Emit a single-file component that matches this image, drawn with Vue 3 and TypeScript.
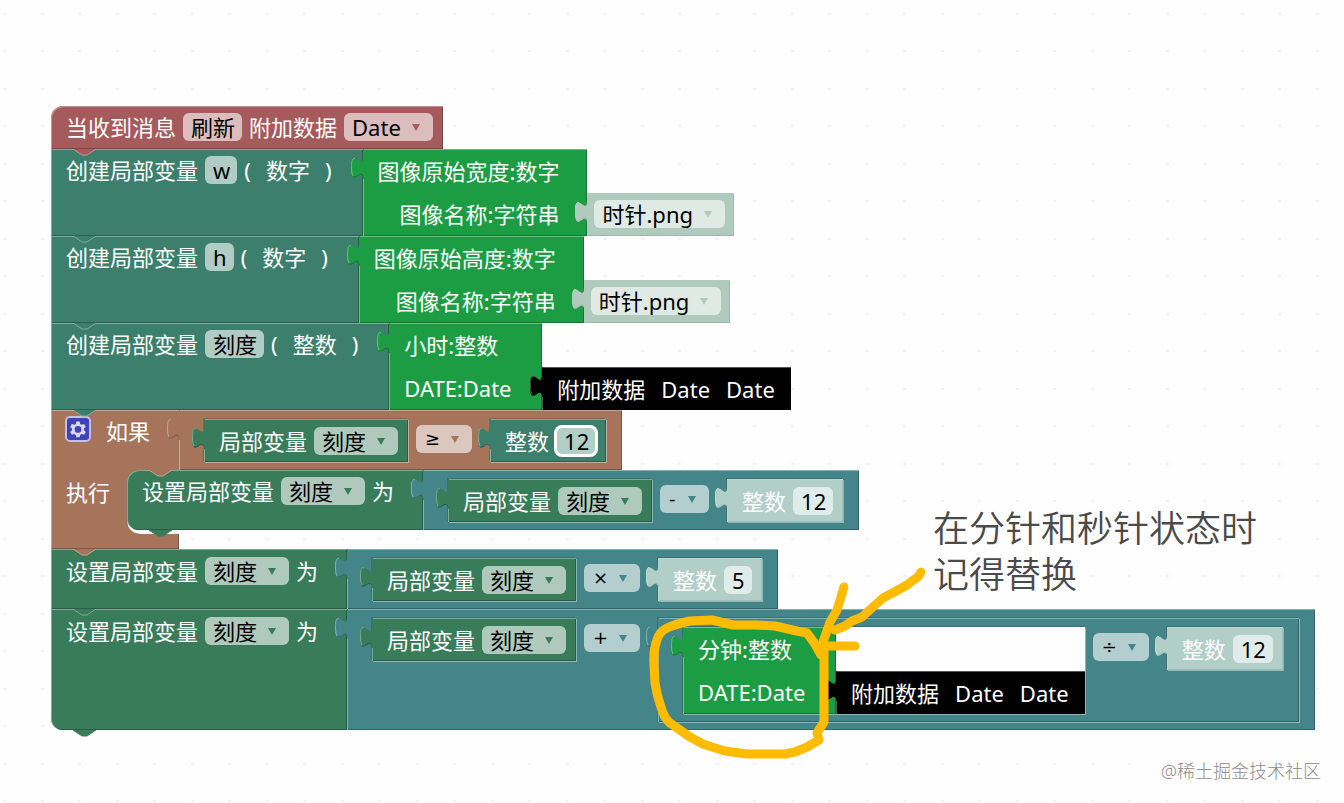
<script setup lang="ts">
import { reactive } from 'vue'

interface ImageVar {
  name: string
  type: string
  title: string
  image: string
}

const imageVars = reactive<ImageVar[]>([
  { name: 'w', type: '数字', title: '图像原始宽度:数字', image: '时针.png' },
  { name: 'h', type: '数字', title: '图像原始高度:数字', image: '时针.png' },
])

const message = reactive({ name: '刷新', data: 'Date' })
const scale = reactive({ name: '刻度', type: '整数' })
const numbers = reactive({ compare: '12', subtract: '12', multiply: '5', divide: '12' })
</script>

<template>
  <main class="workspace">
    <svg class="dots" aria-hidden="true">
      <defs>
        <pattern id="grid" width="75" height="75" patternUnits="userSpaceOnUse">
          <path d="M3 13h3v2h-3zM41 13h3v2h-3zM3 50h3v2h-3zM41 50h3v2h-3z" fill="#f1f1f1" />
        </pattern>
        <symbol id="tab" viewBox="0 0 13 30">
          <path class="tab-fill" d="M13 0H12V8C12 23 0 -4 0 19S12 15 12 30H13Z" />
          <path class="tab-light" d="M4 10C1 8 .5 13 .5 19Q.5 25 2 27" />
          <path class="tab-dark" d="M2 28C6 29 10 22 11.500 27" />
        </symbol>
        <symbol id="notch" viewBox="0 0 24 8">
          <path class="notch-fill" d="M0 -1V0L9 6H14L23 0V-1Z" />
          <path class="notch-line" d="M0 0L9 6H14L23 0" />
        </symbol>
      </defs>
      <rect width="100%" height="100%" fill="url(#grid)" />
    </svg>

    <section class="stack">
      <div class="statement">
        <div class="block body red hat">
          <div class="line">
            <span>当收到消息</span>
            <input v-model="message.name" class="field" aria-label="当收到消息" />
            <span>附加数据</span>
            <span class="drop">
              <select v-model="message.data" class="field" aria-label="附加数据"><option>Date</option></select>
            </span>
          </div>
          <svg class="notch" aria-hidden="true"><use href="#notch" /></svg>
        </div>
      </div>

      <div v-for="item in imageVars" :key="item.title" class="statement">
        <div class="block body pine">
          <div class="line">
            <span>创建局部变量</span>
            <input v-model="item.name" class="field" aria-label="创建局部变量" />
            <span>(</span><span class="type">{{ item.type }}</span><span>)</span>
          </div>
          <svg class="notch" aria-hidden="true"><use href="#notch" /></svg>
        </div>
        <div class="block value call green">
          <svg class="tab" aria-hidden="true"><use href="#tab" /></svg>
          <div class="line">{{ item.title }}</div>
          <div class="line end">图像名称:字符串</div>
        </div>
        <div class="block value leaf low mist">
          <svg class="tab" aria-hidden="true"><use href="#tab" /></svg>
          <span class="drop">
            <select v-model="item.image" class="field" aria-label="图像名称"><option>时针.png</option></select>
          </span>
        </div>
      </div>

      <div class="statement">
        <div class="block body pine">
          <div class="line">
            <span>创建局部变量</span>
            <input v-model="scale.name" class="field" aria-label="创建局部变量" />
            <span>(</span><span class="type">{{ scale.type }}</span><span>)</span>
          </div>
          <svg class="notch" aria-hidden="true"><use href="#notch" /></svg>
        </div>
        <div class="block value call green">
          <svg class="tab" aria-hidden="true"><use href="#tab" /></svg>
          <div class="line">小时:整数</div>
          <div class="line">DATE:Date</div>
        </div>
        <div class="block value low black">
          <svg class="tab" aria-hidden="true"><use href="#tab" /></svg>
          <div class="line words"><span>附加数据</span><span>Date</span><span>Date</span></div>
        </div>
      </div>

      <div class="condition brown">
        <div class="statement">
          <div class="block body head">
            <div class="line">
              <button class="gear" type="button" aria-label="如果">
                <svg viewBox="0 0 24 24" aria-hidden="true">
                  <path
                    fill-rule="evenodd"
                    d="M10 3h4l.6 2.900 2 1.100 2.800-1 2 3.500-2.200 1.900v2.200l2.200 1.900-2 3.500-2.800-1-2 1.100L14 22h-4l-.6-2.900-2-1.100-2.800 1-2-3.500 2.200-1.900v-2.200L2.600 9.500l2-3.500 2.800 1 2-1.100zM12 8.500a4 4 0 1 0 0 8a4 4 0 1 0 0-8z"
                  />
                </svg>
              </button>
              <span class="if">如果</span>
            </div>
          </div>
          <div class="block value operator brown">
            <svg class="tab" aria-hidden="true"><use href="#tab" /></svg>
            <label class="block value inset leaf forest">
              <svg class="tab" aria-hidden="true"><use href="#tab" /></svg>
              <span>局部变量</span>
              <span class="drop"><select class="field"><option>刻度</option></select></span>
            </label>
            <span class="drop op">
              <select class="field" aria-label="比较"><option>≥</option></select>
            </span>
            <label class="block value inset leaf pine">
              <svg class="tab" aria-hidden="true"><use href="#tab" /></svg>
              <span>整数</span>
              <input v-model="numbers.compare" class="field active" />
            </label>
          </div>
        </div>

        <div class="branch">
          <div class="arm">执行</div>
          <div class="mouth">
            <div class="statement">
              <div class="block body forest nested">
                <div class="line">
                  <span>设置局部变量</span>
                  <span class="drop"><select class="field" aria-label="设置局部变量"><option>刻度</option></select></span>
                  <span>为</span>
                </div>
                <svg class="notch tail" aria-hidden="true"><use href="#notch" /></svg>
              </div>
              <div class="block value operator teal">
                <svg class="tab" aria-hidden="true"><use href="#tab" /></svg>
                <label class="block value inset leaf forest">
                  <svg class="tab" aria-hidden="true"><use href="#tab" /></svg>
                  <span>局部变量</span>
                  <span class="drop"><select class="field"><option>刻度</option></select></span>
                </label>
                <span class="drop op narrow">
                  <select class="field" aria-label="运算"><option>-</option></select>
                </span>
                <label class="block value inset leaf pale">
                  <svg class="tab" aria-hidden="true"><use href="#tab" /></svg>
                  <span>整数</span>
                  <input v-model="numbers.subtract" class="field" />
                </label>
              </div>
            </div>
            <svg class="notch inner" aria-hidden="true"><use href="#notch" /></svg>
            <div class="foot"></div>
          </div>
        </div>
        <svg class="notch" aria-hidden="true"><use href="#notch" /></svg>
      </div>

      <div class="statement">
        <div class="block body forest">
          <div class="line">
            <span>设置局部变量</span>
            <span class="drop"><select class="field" aria-label="设置局部变量"><option>刻度</option></select></span>
            <span>为</span>
          </div>
          <svg class="notch" aria-hidden="true"><use href="#notch" /></svg>
        </div>
        <div class="block value operator teal">
          <svg class="tab" aria-hidden="true"><use href="#tab" /></svg>
          <label class="block value inset leaf forest">
            <svg class="tab" aria-hidden="true"><use href="#tab" /></svg>
            <span>局部变量</span>
            <span class="drop"><select class="field"><option>刻度</option></select></span>
          </label>
          <span class="drop op">
            <select class="field" aria-label="运算"><option>×</option></select>
          </span>
          <label class="block value inset leaf pale">
            <svg class="tab" aria-hidden="true"><use href="#tab" /></svg>
            <span>整数</span>
            <input v-model="numbers.multiply" class="field" />
          </label>
        </div>
      </div>

      <div class="statement">
        <div class="block body forest last">
          <div class="line">
            <span>设置局部变量</span>
            <span class="drop"><select class="field" aria-label="设置局部变量"><option>刻度</option></select></span>
            <span>为</span>
          </div>
          <svg class="notch tail" aria-hidden="true"><use href="#notch" /></svg>
        </div>
        <div class="block value operator teal">
          <svg class="tab" aria-hidden="true"><use href="#tab" /></svg>
          <label class="block value inset leaf forest">
            <svg class="tab" aria-hidden="true"><use href="#tab" /></svg>
            <span>局部变量</span>
            <span class="drop"><select class="field"><option>刻度</option></select></span>
          </label>
          <span class="drop op">
            <select class="field" aria-label="运算"><option>+</option></select>
          </span>
          <div class="block value inset operator teal">
            <svg class="tab" aria-hidden="true"><use href="#tab" /></svg>
            <div class="hollow">
              <div class="block value call green">
                <svg class="tab" aria-hidden="true"><use href="#tab" /></svg>
                <div class="line">分钟:整数</div>
                <div class="line">DATE:Date</div>
              </div>
              <div class="block value low black">
                <svg class="tab" aria-hidden="true"><use href="#tab" /></svg>
                <div class="line words"><span>附加数据</span><span>Date</span><span>Date</span></div>
              </div>
            </div>
            <span class="drop op">
              <select class="field" aria-label="运算"><option>÷</option></select>
            </span>
            <label class="block value inset leaf pale">
              <svg class="tab" aria-hidden="true"><use href="#tab" /></svg>
              <span>整数</span>
              <input v-model="numbers.divide" class="field" />
            </label>
          </div>
        </div>
      </div>
    </section>

    <svg class="ink" aria-hidden="true">
      <path d="M821 655L815 644L807 633L797 631L775 626L757 625L733 625L712 620L690 621Q676 624 667 628Q659 632 657 640Q653 650 654 665L655 683Q657 696 661 707Q664 718 670 723L690 737L703 744L712 747L725 751L747 754H785L795 752L807 747L819 740L817 733L824 722V646" />
      <path d="M844 587L837 610L830 622L823 642" />
      <path d="M921 572L918 577L912 581L907 585L898 590L883 598L873 607L862 617L852 621L845 626L835 630" />
      <path d="M823 646H855" />
    </svg>
    <p class="note">在分针和秒针状态时<br />记得替换</p>
    <p class="watermark">@稀土掘金技术社区</p>
  </main>
</template>

<style>
body {
  margin: 0;
}
</style>

<style scoped>
.workspace {
  position: relative;
  box-sizing: border-box;
  min-height: 100vh;
  padding: 106px 0 0 51px;
  background: #fefefe;
  color: #fff;
  font: 22px/28px "Noto Sans", "Noto Sans CJK SC", sans-serif;
  white-space: nowrap;
}
.dots,
.ink {
  position: absolute;
  inset: 0;
  width: 100%;
  height: 100%;
  pointer-events: none;
}
.ink {
  z-index: 5;
  fill: none;
  stroke: #ffbb00;
  stroke-width: 9px;
  stroke-linecap: round;
  stroke-linejoin: round;
}
.stack {
  position: relative;
  width: max-content;
}
.statement {
  display: flex;
}

.red { --c: #a55b5b; }
.pine { --c: #3c7f6c; }
.green { --c: #1d9d43; }
.mist { --c: #b0cbbe; --light: #b0cbbe; --dark: #9dbaac; }
.black { --c: #000; --light: #555; --dark: #000; }
.brown { --c: #a5745b; }
.forest { --c: #387c5a; }
.teal { --c: #44858a; }
.pale { --c: #b2cfc7; --light: #c0d8d1; --dark: #a2c0b9; }
.red, .pine, .green, .brown, .forest, .teal {
  --light: color-mix(in srgb, var(--c) 65%, white);
  --dark: color-mix(in srgb, var(--c) 75%, black);
}

.block {
  position: relative;
  box-sizing: border-box;
  background: var(--c);
  box-shadow: inset 1px 1px var(--light), inset -1px -1px var(--dark);
}
.body {
  padding: 7px 31px 8px 15px;
}
.body.forest {
  padding: 8px 29px 8px 15px;
}
.body.nested {
  padding-top: 7px;
}
.hat {
  padding-right: 10px;
  border-radius: 12px 0 0 0;
}
.line {
  display: flex;
  align-items: center;
  gap: 7px;
  height: 28px;
}
.type {
  padding: 0 8px;
}
.value {
  flex: none;
}
.call {
  display: flex;
  flex-direction: column;
  gap: 15px;
  min-width: 153px;
  padding: 8px 28px 8px 15px;
}
.end {
  align-self: flex-end;
}
.low {
  align-self: flex-end;
  height: 43px;
}
.leaf {
  display: flex;
  gap: 7px;
  height: 43px;
  padding: 8px 10px 7px 15px;
}
.mist {
  padding: 7px 9px 8px 7px;
}
.black {
  padding: 8px 16px 7px 15px;
}
.words {
  gap: 16px;
}
.operator {
  display: flex;
  align-items: flex-start;
  padding: 9px 16px 8px 25px;
}
.inset {
  box-shadow: inset 1px 1px var(--light), inset -1px -1px var(--dark),
    1px 1px rgba(255, 255, 255, 0.4), -1px -1px rgba(0, 0, 0, 0.15);
}
.hollow {
  display: flex;
  background: #fefefe;
  box-shadow: 1px 1px rgba(255, 255, 255, 0.4), -1px -1px rgba(0, 0, 0, 0.15);
}

.tab {
  position: absolute;
  left: -12px;
  top: 0;
  width: 13px;
  height: 30px;
}
.tab-fill,
.notch-fill {
  fill: var(--c);
}
.tab-light,
.tab-dark,
.notch-line {
  fill: none;
  stroke: var(--light);
}
.tab-dark {
  stroke: var(--dark);
}
.notch {
  position: absolute;
  z-index: 2;
  left: 22px;
  top: 100%;
  width: 24px;
  height: 8px;
}
.tail {
  --light: var(--c);
}

.field {
  box-sizing: border-box;
  height: 28px;
  margin: 0;
  padding: 0 7px 0 8px;
  border: 0;
  border-radius: 6px;
  outline: 0;
  background: rgba(255, 255, 255, 0.6);
  color: #000;
  font: inherit;
  field-sizing: content;
  appearance: none;
}
.drop {
  position: relative;
  display: flex;
}
.drop .field {
  padding-right: 32px;
}
.drop::after {
  content: "";
  position: absolute;
  right: 13px;
  top: 11px;
  border: solid transparent;
  border-width: 7px 4px 0;
  border-top-color: var(--c);
  pointer-events: none;
}
.op {
  margin: 6px 18px 0 8px;
}
.op .field {
  width: 56px;
  padding: 0 0 0 9px;
  font-family: "DejaVu Sans", sans-serif;
  font-size: 18px;
}
.narrow .field {
  width: 49px;
}
.active {
  background: #b1cfc7;
  box-shadow: 0 0 0 2px #fff, inset 0 0 0 1px #fff;
}

.condition {
  position: relative;
}
.head {
  width: 128px;
  padding-left: 14px;
  box-shadow: inset 1px 1px var(--light);
}
.gear {
  box-sizing: border-box;
  width: 26px;
  height: 26px;
  margin: 0 0 4px;
  padding: 1px;
  border: 2px solid #c5bfe3;
  border-radius: 5px;
  background: #3f42b8;
}
.gear svg {
  display: block;
  width: 20px;
  height: 20px;
  fill: #d9d6ee;
}
.if {
  padding-left: 8px;
}
.branch {
  display: flex;
}
.arm {
  box-sizing: border-box;
  width: 76px;
  padding: 8px 0 0 15px;
  background: var(--c);
  box-shadow: inset 1px 0 var(--light), inset 0 -1px var(--dark);
}
.mouth {
  position: relative;
}
.mouth::before,
.mouth::after {
  content: "";
  position: absolute;
  left: 0;
  top: 0;
  width: 12px;
  height: 12px;
  background: var(--c);
}
.mouth::after {
  top: auto;
  bottom: 15px;
  background: radial-gradient(circle at 100% 0, #fefefe 11px, var(--c) 12px);
}
.mouth > .statement {
  position: relative;
  z-index: 1;
}
.nested {
  border-radius: 12px 0 0 12px;
}
.last {
  border-radius: 0 0 0 12px;
}
.inner {
  top: 0;
}
.foot {
  width: 52px;
  height: 15px;
  margin-top: 4px;
  background: var(--c);
  box-shadow: inset -1px -1px var(--dark);
}

.note {
  position: absolute;
  z-index: 5;
  left: 933px;
  top: 506px;
  margin: 0;
  color: #4a4a4a;
  font-size: 36px;
  font-weight: 350;
  line-height: 46px;
}
.watermark {
  position: absolute;
  right: 23px;
  bottom: 18px;
  margin: 0;
  color: #8c8c8c;
  font-size: 18px;
  font-weight: 300;
}
</style>
